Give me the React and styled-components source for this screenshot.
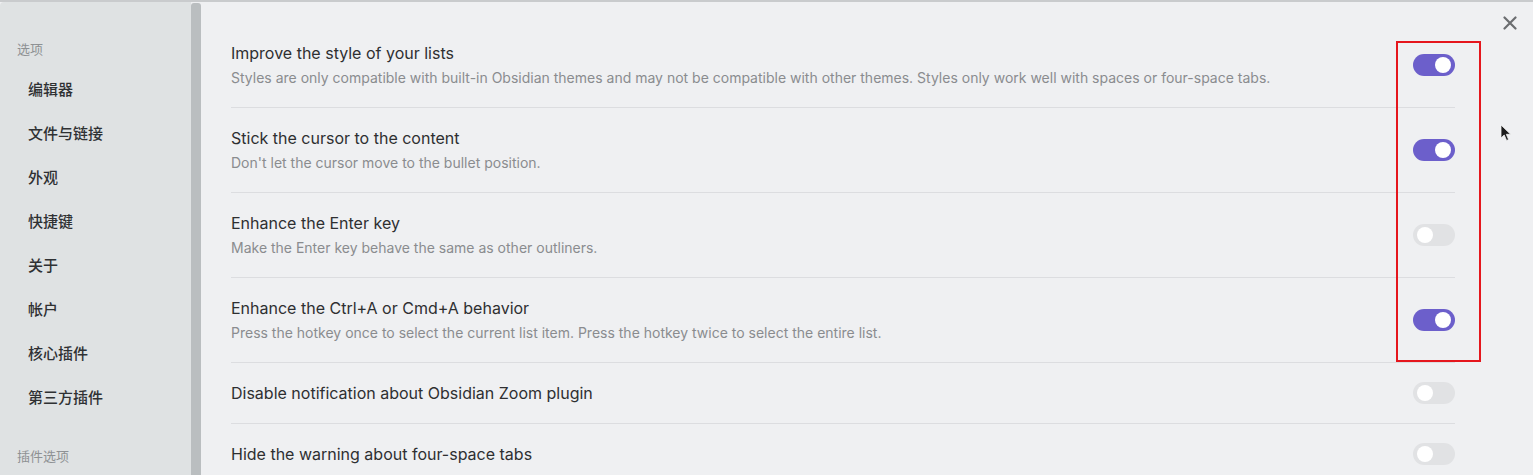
import React from "react";
import styled, { createGlobalStyle } from "styled-components";

const GlobalStyle = createGlobalStyle`
  html, body {
    margin: 0;
    padding: 0;
    background: #eff0f2;
  }
  body {
    font-family: Inter, "Noto Sans", "Noto Sans CJK SC", sans-serif;
    -webkit-font-smoothing: antialiased;
  }
`;

const settings = [
  {
    title: "Improve the style of your lists",
    desc: "Styles are only compatible with built-in Obsidian themes and may not be compatible with other themes. Styles only work well with spaces or four-space tabs.",
    on: true,
  },
  {
    title: "Stick the cursor to the content",
    desc: "Don't let the cursor move to the bullet position.",
    on: true,
  },
  {
    title: "Enhance the Enter key",
    desc: "Make the Enter key behave the same as other outliners.",
    on: false,
  },
  {
    title: "Enhance the Ctrl+A or Cmd+A behavior",
    desc: "Press the hotkey once to select the current list item. Press the hotkey twice to select the entire list.",
    on: true,
  },
  { title: "Disable notification about Obsidian Zoom plugin", on: false },
  { title: "Hide the warning about four-space tabs", on: false },
];

const navItems = ["编辑器", "文件与链接", "外观", "快捷键", "关于", "帐户", "核心插件", "第三方插件"];

const App = () => {
  return (
    <>
      <GlobalStyle />
      <Modal>
        <Sidebar>
          <GroupLabel>选项</GroupLabel>
          <NavList>
            {navItems.map((item) => (
              <NavItem key={item}>{item}</NavItem>
            ))}
          </NavList>
          <GroupLabel $bottom>插件选项</GroupLabel>
        </Sidebar>
        <ScrollThumb />
        <Content>
          <SettingList>
            {settings.map((s, i) => (
              <SettingItem key={s.title} $first={i === 0}>
                <Info>
                  <Title>{s.title}</Title>
                  {s.desc && <Desc>{s.desc}</Desc>}
                </Info>
                <Toggle $on={s.on}>
                  <Knob $on={s.on} />
                </Toggle>
              </SettingItem>
            ))}
          </SettingList>
        </Content>
        <CloseButton>
          <svg width="14" height="14" viewBox="0 0 14 14">
            <path d="M1.5 1.5 L12.5 12.5 M12.5 1.5 L1.5 12.5" stroke="#6b6d70" strokeWidth="2.2" strokeLinecap="round" />
          </svg>
        </CloseButton>
        <Highlight />
        <Cursor>
          <svg width="12" height="18" viewBox="0 0 12 18">
            <path d="M1 1 L1 14 L4.2 11 L6.6 16.5 L8.6 15.6 L6.3 10.3 L10.6 10.3 Z" fill="#1c1c1c" stroke="#f4f4f4" strokeWidth="0.8" />
          </svg>
        </Cursor>
      </Modal>
    </>
  );
};

const Modal = styled.div`
  position: relative;
  display: flex;
  width: 1533px;
  height: 475px;
  overflow: hidden;
  background: #eff0f2;
  border-top: 2px solid #c9cbcd;
  box-sizing: border-box;
`;

const Sidebar = styled.div`
  width: 191px;
  flex-shrink: 0;
  background: #dfe2e3;
  padding: 37px 0 0 0;
  box-sizing: border-box;
  font-family: "Noto Sans CJK SC", sans-serif;
  border-top-left-radius: 4px;
`;

const GroupLabel = styled.div`
  padding-left: 17px;
  font-size: 13px;
  line-height: 20px;
  color: #8e9193;
  margin-top: ${({ $bottom }) => ($bottom ? "34px" : "0")};
`;

const NavList = styled.div`
  display: flex;
  flex-direction: column;
  gap: 14px;
  margin-top: 15px;
`;

const NavItem = styled.div`
  padding-left: 28px;
  font-size: 15px;
  line-height: 30px;
  color: #2f3133;
  font-weight: 500;
`;

const ScrollThumb = styled.div`
  width: 10px;
  flex-shrink: 0;
  background: #babec0;
  border-radius: 3px 3px 0 0;
  margin-top: 1px;
`;

const Content = styled.div`
  flex: 1;
  padding: 20px 78px 0 30px;
`;

const SettingList = styled.div`
  display: flex;
  flex-direction: column;
`;

const SettingItem = styled.div`
  display: flex;
  align-items: center;
  justify-content: space-between;
  padding: 19px 0;
  border-top: 1px solid ${({ $first }) => ($first ? "transparent" : "#dcdde0")};
`;

const Info = styled.div`
  display: flex;
  flex-direction: column;
`;

const Title = styled.div`
  font-size: 16px;
  line-height: 22px;
  color: #2e2f31;
`;

const Desc = styled.div`
  margin-top: 4px;
  font-size: 14px;
  line-height: 20px;
  color: #8a8c8f;
`;

const Toggle = styled.div`
  position: relative;
  width: 42px;
  height: 22px;
  border-radius: 11px;
  flex-shrink: 0;
  background: ${({ $on }) => ($on ? "#6c5fcb" : "#e1e2e4")};
`;

const Knob = styled.div`
  position: absolute;
  top: 3px;
  left: ${({ $on }) => ($on ? "22px" : "4px")};
  width: 16px;
  height: 16px;
  border-radius: 50%;
  background: #ffffff;
`;

const CloseButton = styled.div`
  position: absolute;
  top: 14px;
  right: 16px;
  width: 14px;
  height: 14px;
  display: flex;
`;

const Highlight = styled.div`
  position: absolute;
  left: 1396px;
  top: 39px;
  width: 85px;
  height: 321px;
  border: 2px solid #e5161d;
  box-sizing: border-box;
`;

const Cursor = styled.div`
  position: absolute;
  left: 1500px;
  top: 122px;
  display: flex;
`;

export default App;
